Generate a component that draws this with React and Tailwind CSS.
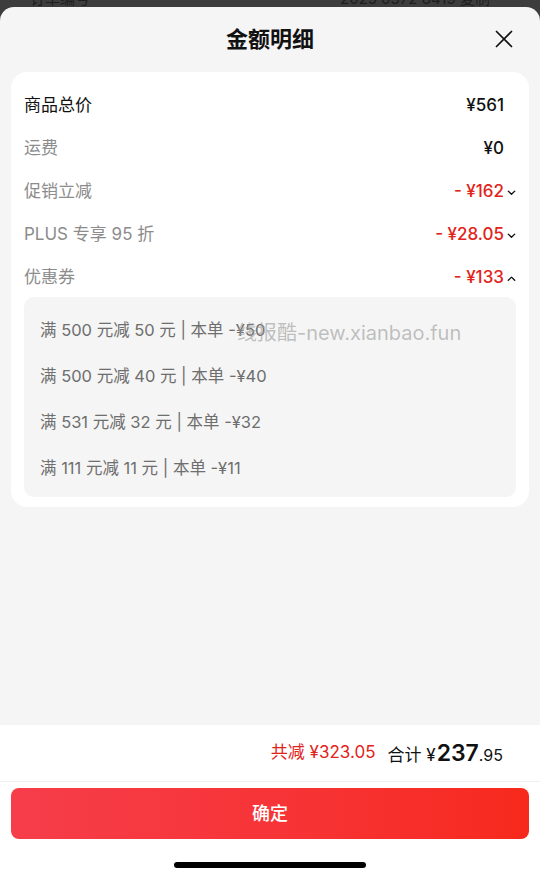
import React from 'react';

const font = { fontFamily: 'Inter, "Noto Sans CJK SC", sans-serif' };

function Chevron({ up }) {
  return (
    <svg width="11" height="11" viewBox="0 0 12 12" className="ml-[2px] mt-[1px]">
      <path
        d={up ? 'M2.5 8 L6 4.5 L9.5 8' : 'M2.5 4.5 L6 8 L9.5 4.5'}
        fill="none"
        stroke="#111"
        strokeWidth="1.5"
        strokeLinecap="round"
        strokeLinejoin="round"
      />
    </svg>
  );
}

const rows = [
  { label: '商品总价', value: '¥561', strong: true },
  { label: '运费', value: '¥0' },
  { label: '促销立减', value: '- ¥162', red: true, chevron: 'down' },
  { label: 'PLUS 专享 95 折', value: '- ¥28.05', red: true, chevron: 'down' },
  { label: '优惠券', value: '- ¥133', red: true, chevron: 'up' },
];

const coupons = [
  '满 500 元减 50 元 | 本单 -¥50',
  '满 500 元减 40 元 | 本单 -¥40',
  '满 531 元减 32 元 | 本单 -¥32',
  '满 111 元减 11 元 | 本单 -¥11',
];

export default function App() {
  return (
    <div className="h-[883px] w-[540px] bg-[#3d3d3d] flex flex-col overflow-hidden" style={font}>
      {/* Page behind the sheet */}
      <div className="h-[7px] overflow-hidden flex justify-between px-[30px] text-[#1e1e1e] text-[15px] leading-[15px]">
        <span className="-mt-[9px]">订单编号</span>
        <span className="-mt-[9px] mr-[20px]">2025 0372 8419 复制</span>
      </div>

      {/* Sheet */}
      <div className="flex-1 flex flex-col bg-[#f5f5f5] rounded-t-[14px]">
        {/* Header */}
        <div className="relative h-[65px] flex items-center justify-center">
          <h1 className="text-[22px] font-semibold text-[#111]">金额明细</h1>
          <button className="absolute right-[27px] top-[23px] w-[18px] h-[18px]">
            <svg width="18" height="18" viewBox="0 0 18 18">
              <path d="M1.5 1.5 L16.5 16.5 M16.5 1.5 L1.5 16.5" stroke="#111" strokeWidth="1.7" strokeLinecap="round" />
            </svg>
          </button>
        </div>

        {/* Detail card */}
        <div className="mx-[11px] bg-white rounded-[16px] pt-[10px] pb-[10px] pl-[13px] pr-[12px]">
          {rows.map((r) => (
            <div key={r.label} className="h-[43px] pt-[4px] flex items-center justify-between">
              <span className={`text-[17px] ${r.strong ? 'text-[#111]' : 'text-[#8c8c8c]'}`}>{r.label}</span>
              <span className="flex items-center">
                <span
                  className={`text-[17px] font-medium ${r.red ? 'text-[#e2231a]' : 'text-[#111]'} ${
                    r.chevron ? '' : 'mr-[13px]'
                  }`}
                >
                  {r.value}
                </span>
                {r.chevron && <Chevron up={r.chevron === 'up'} />}
              </span>
            </div>
          ))}

          {/* Coupon list */}
          <div className="relative bg-[#f5f5f5] rounded-[10px] mr-[1px] pt-[9px] pb-[7px] pl-[16px]">
            {coupons.map((c) => (
              <div key={c} className="h-[46px] pt-[2px] flex items-center text-[16.5px] text-[#6e6e6e]">
                {c}
              </div>
            ))}
            <span className="absolute left-[213px] top-[21px] text-[20px] text-[#9a9a9a]/60 pointer-events-none">
              线报酷-new.xianbao.fun
            </span>
          </div>
        </div>

        <div className="flex-1" />

        {/* Footer */}
        <div className="bg-white">
          <div className="h-[57px] flex items-center justify-end pr-[37px] border-b border-[#efefef]">
            <span className="text-[17px] text-[#e2231a] mr-[12px]">共减 ¥323.05</span>
            <span className="text-[17px] text-[#111] flex items-baseline">
              合计 ¥<span className="text-[23px] font-semibold ml-[1px]">237</span>
              <span className="text-[16px]">.95</span>
            </span>
          </div>
          <div className="px-[11px] pt-[6px]">
            <button className="w-full h-[51px] rounded-[8px] bg-gradient-to-r from-[#f63d4a] to-[#f7291c] text-white text-[18px] font-medium">
              确定
            </button>
          </div>
          <div className="h-[44px] flex items-center justify-center pt-[8px]">
            <div className="w-[192px] h-[6px] rounded-full bg-black" />
          </div>
        </div>
      </div>
    </div>
  );
}
